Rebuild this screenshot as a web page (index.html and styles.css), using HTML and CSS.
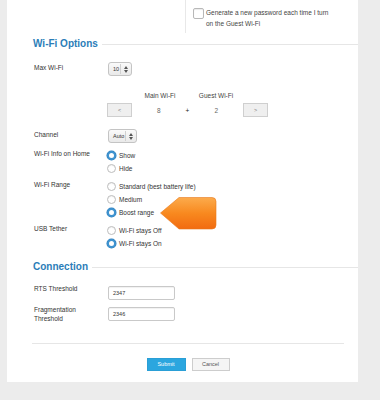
FILE: index.html
```html
<!DOCTYPE html>
<html>
<head>
<title>Wi-Fi Options</title>
<link rel="stylesheet" href="styles.css">
</head>
<body>
<div class="page">
<div class="card">

  <div class="top">
    <div class="topLeft"></div>
    <div class="topRight">
      <span class="check"></span>
      <p class="checkTxt">Generate a new password each time I turn<br>on the Guest Wi-Fi</p>
    </div>
  </div>

  <h2 class="section first">Wi-Fi Options</h2>

  <div class="form">
    <div class="row rowMax">
      <div class="lbl">Max Wi-Fi</div>
      <div><span class="sel">10 <i></i><svg width="4" height="7" viewBox="0 0 4 7"><path d="M0 3 L2 0 L4 3 Z M0 4 L2 7 L4 4 Z" fill="#555"/></svg></span></div>
    </div>

    <div class="row rowHead">
      <div></div>
      <div class="split">
        <span></span><span>Main Wi-Fi</span><span>Guest Wi-Fi</span>
      </div>
    </div>

    <div class="row rowStep">
      <div></div>
      <div class="stepper">
        <span class="stepBtn">&lt;</span>
        <div class="vals"><span>8</span><b>+</b><span>2</span></div>
        <span class="stepBtn">&gt;</span>
      </div>
    </div>

    <div class="row rowChan">
      <div class="lbl">Channel</div>
      <div><span class="sel">Auto <i></i><svg width="4" height="7" viewBox="0 0 4 7"><path d="M0 3 L2 0 L4 3 Z M0 4 L2 7 L4 4 Z" fill="#555"/></svg></span></div>
    </div>

    <div class="row rowRadio gap6">
      <div class="lbl">Wi-Fi Info on Home</div>
      <div class="radios">
        <label class="opt"><span class="radio on"></span>Show</label>
        <label class="opt"><span class="radio"></span>Hide</label>
      </div>
    </div>

    <div class="row rowRadio gap5">
      <div class="lbl">Wi-Fi Range</div>
      <div class="radios">
        <label class="opt"><span class="radio"></span>Standard (best battery life)</label>
        <label class="opt"><span class="radio"></span>Medium</label>
        <label class="opt"><span class="radio on"></span>Boost range</label>
      </div>
    </div>

    <div class="row rowRadio gap5">
      <div class="lbl">USB Tether</div>
      <div class="radios">
        <label class="opt"><span class="radio"></span>Wi-Fi stays Off</label>
        <label class="opt"><span class="radio on"></span>Wi-Fi stays On</label>
      </div>
    </div>
  </div>

  <h2 class="section second">Connection</h2>

  <div class="form">
    <div class="row rowRts">
      <div class="lbl lblTight">RTS Threshold</div>
      <div><span class="txt">2347</span></div>
    </div>
    <div class="row rowFrag">
      <div class="lbl lblTight">Fragmentation<br>Threshold</div>
      <div><span class="txt">2346</span></div>
    </div>
  </div>

  <div class="foot">
    <hr class="rule">
    <div class="btns">
      <span class="btn submit">Submit</span>
      <span class="btn cancel">Cancel</span>
    </div>
  </div>

  <svg class="tag" width="60" height="36" viewBox="0 0 60 36">
    <defs>
      <linearGradient id="og" x1="0" y1="0" x2="0" y2="1">
        <stop offset="0" stop-color="#fcab4c"/>
        <stop offset="0.5" stop-color="#f8891f"/>
        <stop offset="1" stop-color="#f26b10"/>
      </linearGradient>
    </defs>
    <path d="M1.5 17 L20 1.5 H53 Q57 1.5 57 5.5 V29 Q57 33 53 33 H20 Z" fill="url(#og)" stroke="#e8791d" stroke-width="0.6" stroke-linejoin="round"/>
  </svg>

</div>
</div>
</body>
</html>
```

FILE: styles.css
```css
body { margin:0; padding:0; background:#ececec; font-family:"Liberation Sans", Arial, sans-serif; font-size:6.5px; color:#333333; }
.page { height:400px; padding-left:7px; box-sizing:border-box; background:#ececec; }
.card { position:relative; width:351px; background:#ffffff; padding-bottom:11px; }

.top { display:grid; grid-template-columns:179px 1fr; height:33px; }
.topLeft { border-right:1px solid #e8e8e8; height:33px; }
.topRight { display:flex; align-items:flex-start; padding:7px 0 0 7px; }
.check { width:9px; height:9px; border:1px solid #b8b8b8; border-radius:2px; margin-top:1px; background:#fff; box-shadow:inset 0 1px 1px rgba(0,0,0,0.08); }
.checkTxt { margin:0 0 0 2px; line-height:11px; color:#444; }

.section { display:flex; align-items:center; margin:0; padding-left:26px; height:12px; line-height:12px; font-size:10px; font-weight:bold; color:#2b7db8; }
.section::after { content:""; flex:1; height:1px; background:#e6e6e6; margin-left:4px; }
.first { margin-top:5px; }
.second { margin-top:11px; }

.form { padding-left:27px; }
.row { display:grid; grid-template-columns:73px 1fr; align-items:start; }
.lbl { line-height:11px; color:#333; }
.rowRadio .lbl { line-height:9px; }
.lblTight { line-height:9px; margin-top:-2px; }

.rowMax { margin-top:12px; }
.rowHead { margin-top:15px; line-height:10px; }
.rowStep { margin-top:2px; }
.rowChan { margin-top:12px; }
.gap6 { margin-top:6px; }
.gap5 { margin-top:5px; }
.rowRts { margin-top:13px; }
.rowFrag { margin-top:7px; }

.sel { display:inline-flex; align-items:center; height:14px; box-sizing:border-box; padding:0 3px 0 4px; margin-left:1px; border:1px solid #c4c4c4; border-radius:3px; background:linear-gradient(#fafafa,#e9e9e9); font-size:5.5px; color:#333; }
.sel i { width:1px; height:10px; background:#d0d0d0; margin:0 3px 0 1px; }

.split { display:grid; grid-template-columns:25px 56px 56px; color:#444; }
.split span { text-align:center; }

.stepper { display:flex; align-items:center; height:14px; }
.stepBtn { width:25px; height:14px; box-sizing:border-box; border:1px solid #cfcfcf; background:#efefef; text-align:center; line-height:12px; font-size:5.5px; color:#777; }
.vals { display:grid; grid-template-columns:1fr auto 1fr; width:111px; color:#666; }
.vals span { text-align:center; }
.vals b { font-weight:normal; color:#222; }

.radios { display:flex; flex-direction:column; }
.opt { display:flex; align-items:center; height:13px; color:#333; }
.radio { width:9px; height:9px; box-sizing:border-box; border:1px solid #bdbdbd; border-radius:50%; background:#fff; margin-right:3px; box-shadow:inset 0 1px 1px rgba(0,0,0,0.06); }
.radio.on { border:2.5px solid #3f93cf; background:#ffffff; box-shadow:0 0 0 0.5px #2f7fbe; }

.txt { display:flex; align-items:center; width:67px; height:14px; box-sizing:border-box; border:1px solid #c9c9c9; border-radius:2px; padding-left:4px; margin-left:1px; font-size:5.5px; color:#333; box-shadow:inset 0 1px 1px rgba(0,0,0,0.06); }

.foot { padding:0 14px 0 25px; }
.rule { margin:20px 0 0 0; border:0; height:1px; background:#e6e6e6; }
.btns { display:flex; justify-content:center; gap:6px; margin-top:14px; }
.btn { height:13px; box-sizing:border-box; line-height:11px; text-align:center; font-size:5.5px; }
.submit { width:39px; background:#2ba6df; border:1px solid #2a9fd6; color:#ffffff; }
.cancel { width:38px; background:#f5f5f5; border:1px solid #cdcdcd; color:#555; }

.tag { position:absolute; left:152px; top:196px; }
```
